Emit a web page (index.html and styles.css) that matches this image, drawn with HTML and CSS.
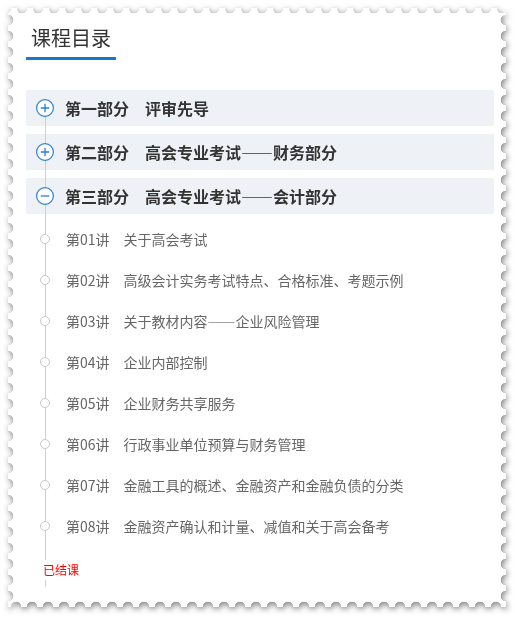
FILE: index.html
```html
<!DOCTYPE html>
<html lang="zh-CN">
<head>
<meta charset="utf-8">
<title>课程目录</title>
<link rel="stylesheet" href="styles.css">
</head>
<body>
<div class="stamp-shadow">
  <div class="stamp">
    <div class="title-wrap"><h2 class="title">课程目录</h2></div>
    <div class="tree">
      <div class="part">
        <svg class="toggle" width="18" height="18" viewBox="0 0 18 18"><circle cx="9" cy="9" r="8.4" fill="#fff" stroke="#2a7fd4" stroke-width="1.2"/><path d="M4.8 9h8.4M9 4.8v8.4" stroke="#2a7fd4" stroke-width="1.3" fill="none"/></svg>
        <span class="part-name">第一部分　评审先导</span>
      </div>
      <div class="part">
        <svg class="toggle" width="18" height="18" viewBox="0 0 18 18"><circle cx="9" cy="9" r="8.4" fill="#fff" stroke="#2a7fd4" stroke-width="1.2"/><path d="M4.8 9h8.4M9 4.8v8.4" stroke="#2a7fd4" stroke-width="1.3" fill="none"/></svg>
        <span class="part-name">第二部分　高会专业考试——财务部分</span>
      </div>
      <div class="part">
        <svg class="toggle" width="18" height="18" viewBox="0 0 18 18"><circle cx="9" cy="9" r="8.4" fill="#fff" stroke="#2a7fd4" stroke-width="1.2"/><path d="M4.8 9h8.4" stroke="#2a7fd4" stroke-width="1.3" fill="none"/></svg>
        <span class="part-name">第三部分　高会专业考试——会计部分</span>
      </div>
      <ul class="lessons">
        <li class="lesson"><span class="dot"></span><span class="lesson-name">第01讲　关于高会考试</span></li>
        <li class="lesson"><span class="dot"></span><span class="lesson-name">第02讲　高级会计实务考试特点、合格标准、考题示例</span></li>
        <li class="lesson"><span class="dot"></span><span class="lesson-name">第03讲　关于教材内容——企业风险管理</span></li>
        <li class="lesson"><span class="dot"></span><span class="lesson-name">第04讲　企业内部控制</span></li>
        <li class="lesson"><span class="dot"></span><span class="lesson-name">第05讲　企业财务共享服务</span></li>
        <li class="lesson"><span class="dot"></span><span class="lesson-name">第06讲　行政事业单位预算与财务管理</span></li>
        <li class="lesson"><span class="dot"></span><span class="lesson-name">第07讲　金融工具的概述、金融资产和金融负债的分类</span></li>
        <li class="lesson"><span class="dot"></span><span class="lesson-name">第08讲　金融资产确认和计量、减值和关于高会备考</span></li>
      </ul>
      <div class="ended">已结课</div>
    </div>
  </div>
</div>
</body>
</html>
```
FILE: styles.css
```css
html, body {
  margin: 0;
  padding: 0;
  background: #fff;
}
body {
  padding: 8px;
  font-family: "Noto Sans CJK SC", "Noto Sans", sans-serif;
  color: #333;
}
.stamp-shadow {
  width: 498px;
  filter: drop-shadow(1px 2px 3px rgba(0, 0, 0, 0.5));
}
.stamp {
  box-sizing: border-box;
  height: 599px;
  background: #fff;
  padding: 15px 12px 0 18px;
  -webkit-mask-image:
    radial-gradient(circle at 50% 0, transparent 5px, #000 5.6px),
    radial-gradient(circle at 50% 100%, transparent 5px, #000 5.6px),
    radial-gradient(circle at 0 50%, transparent 5px, #000 5.6px),
    radial-gradient(circle at 100% 50%, transparent 5px, #000 5.6px);
  -webkit-mask-size: 16px 100%, 16px 100%, 100% 16px, 100% 16px;
  -webkit-mask-repeat: repeat-x, repeat-x, repeat-y, repeat-y;
  -webkit-mask-position: 6px 0, 0 0, 0 4px, 0 4px;
  -webkit-mask-composite: source-in;
  mask-image:
    radial-gradient(circle at 50% 0, transparent 5px, #000 5.6px),
    radial-gradient(circle at 50% 100%, transparent 5px, #000 5.6px),
    radial-gradient(circle at 0 50%, transparent 5px, #000 5.6px),
    radial-gradient(circle at 100% 50%, transparent 5px, #000 5.6px);
  mask-size: 16px 100%, 16px 100%, 100% 16px, 100% 16px;
  mask-repeat: repeat-x, repeat-x, repeat-y, repeat-y;
  mask-position: 6px 0, 0 0, 0 4px, 0 4px;
  mask-composite: intersect;
}
.title-wrap {
  display: flex;
}
.title {
  margin: 0;
  padding: 0 5px 4px;
  font-size: 20px;
  font-weight: 400;
  line-height: 30px;
  color: #333;
  border-bottom: 3px solid #1a78d2;
}
.tree {
  position: relative;
  margin-top: 30px;
  padding-bottom: 7px;
}
.tree::before {
  content: "";
  position: absolute;
  left: 18.5px;
  top: 18px;
  bottom: 0;
  width: 1px;
  background: #cfcfcf;
  z-index: 1;
}
.part {
  display: flex;
  align-items: center;
  gap: 11px;
  height: 36px;
  padding-left: 10px;
  background: #eef1f5;
  margin-bottom: 8px;
}
.part:nth-child(3) {
  margin-bottom: 0;
}
.toggle {
  position: relative;
  z-index: 2;
  flex: none;
  display: block;
}
.part-name {
  font-size: 16px;
  font-weight: 700;
  color: #333;
  line-height: 20px;
}
.lessons {
  list-style: none;
  margin: 4px 0 0;
  padding: 0;
}
.lesson {
  display: flex;
  align-items: center;
  gap: 16px;
  height: 41px;
  padding-left: 14px;
}
.dot {
  position: relative;
  z-index: 2;
  flex: none;
  box-sizing: border-box;
  width: 10px;
  height: 10px;
  border: 1px solid #c8c8c8;
  border-radius: 50%;
  background: #fff;
}
.lesson-name {
  font-size: 14px;
  color: #666;
  line-height: 20px;
}
.ended {
  position: relative;
  z-index: 2;
  display: inline-block;
  margin: 14px 0 0 17px;
  font-size: 12px;
  line-height: 20px;
  color: #f00;
  background: #fff;
}
```
